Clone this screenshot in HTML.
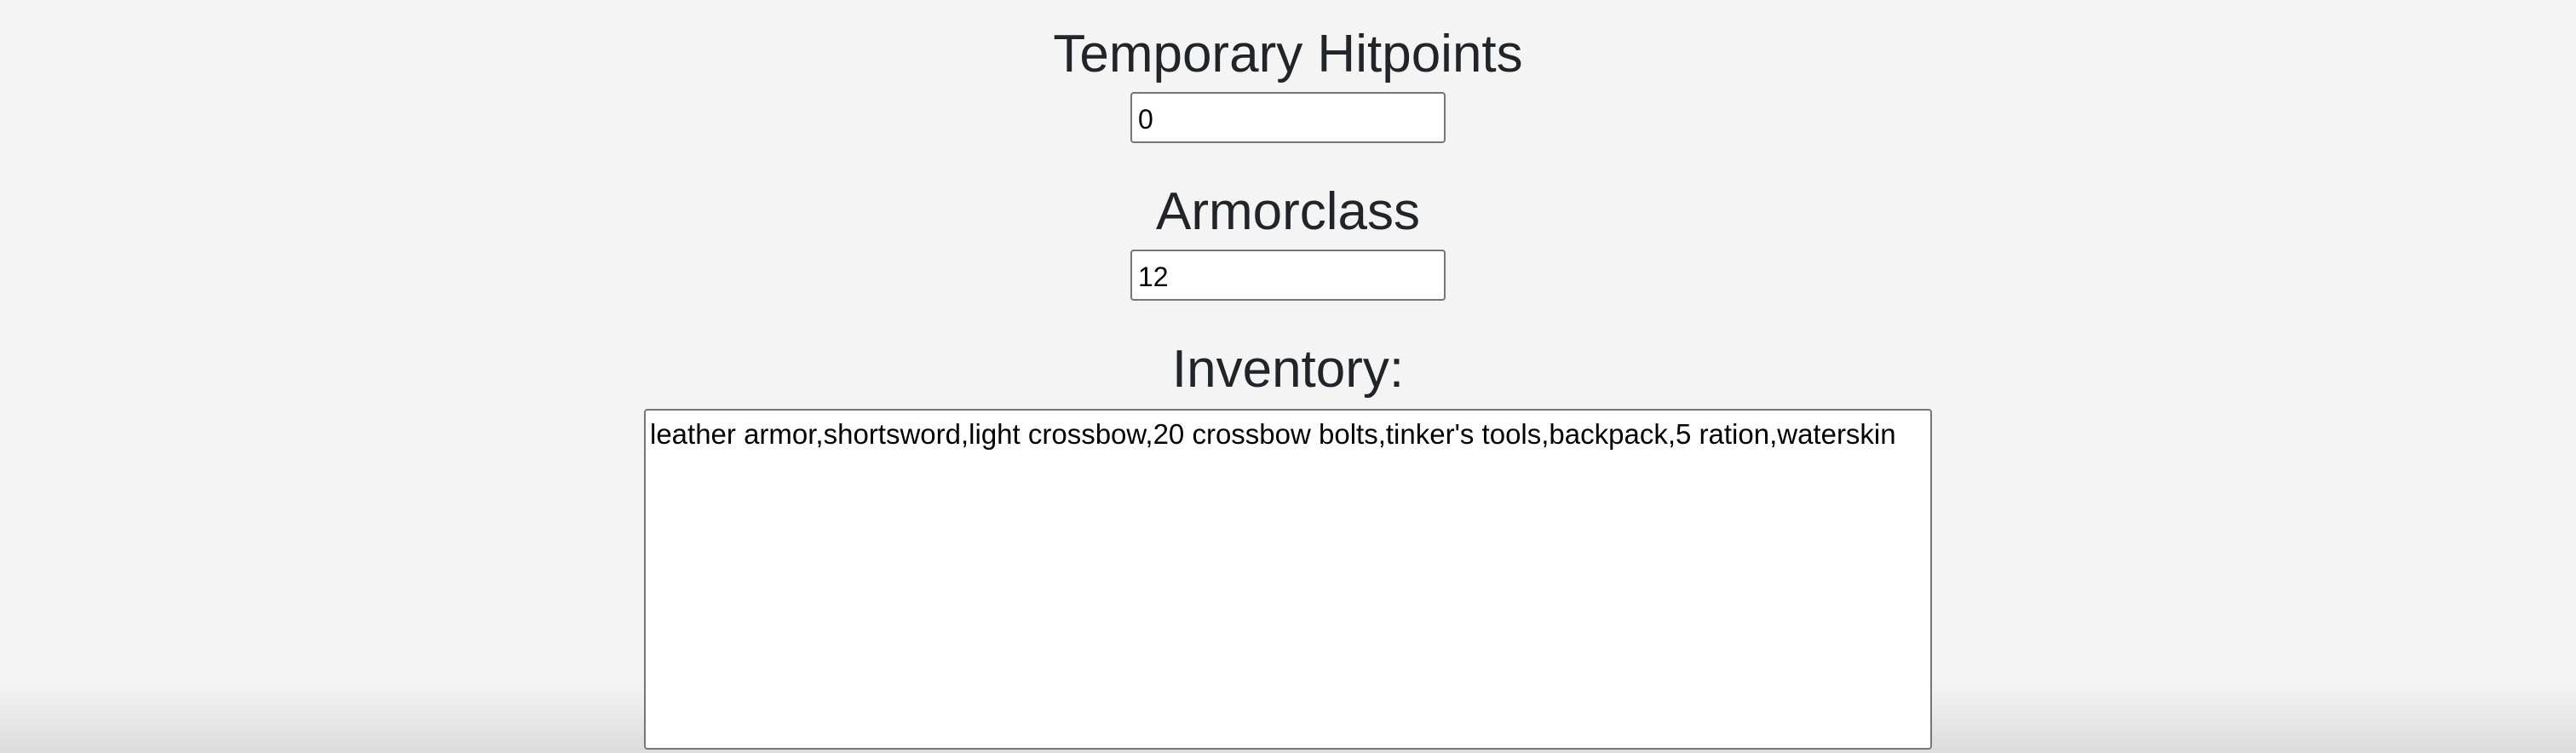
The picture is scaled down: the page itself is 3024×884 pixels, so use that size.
<!DOCTYPE html>
<html><head><style>
html,body{margin:0;padding:0;}
body{width:3024px;height:884px;background:#f4f4f4;position:relative;overflow:hidden;font-family:"Liberation Sans",Arial,sans-serif;color:#212529;}
.h{position:absolute;left:0;width:3024px;text-align:center;font-size:62px;line-height:64px;font-weight:400;margin:0;}
.in{position:absolute;background:#fff;border:2px solid #767676;border-radius:4px;box-sizing:border-box;font-size:32px;color:#000;}
.shade{position:absolute;left:0;top:800px;width:3024px;height:84px;background:linear-gradient(#f4f4f400,#dcdcdc);}
</style></head><body>
<div class="shade"></div>
<div class="h" style="top:32px">Temporary Hitpoints</div>
<div class="in" style="left:1327px;top:108px;width:370px;height:60px;padding:10px 0 0 7px;line-height:40px">0</div>
<div class="h" style="top:217px">Armorclass</div>
<div class="in" style="left:1327px;top:293px;width:370px;height:60px;padding:10px 0 0 7px;line-height:40px">12</div>
<div class="h" style="top:402px">Inventory:</div>
<div class="in" style="left:756px;top:480px;width:1512px;height:400px;padding:8px 0 0 5px;line-height:40px;font-size:33px">leather armor,shortsword,light crossbow,20 crossbow bolts,tinker's tools,backpack,5 ration,waterskin</div>
</body></html>
